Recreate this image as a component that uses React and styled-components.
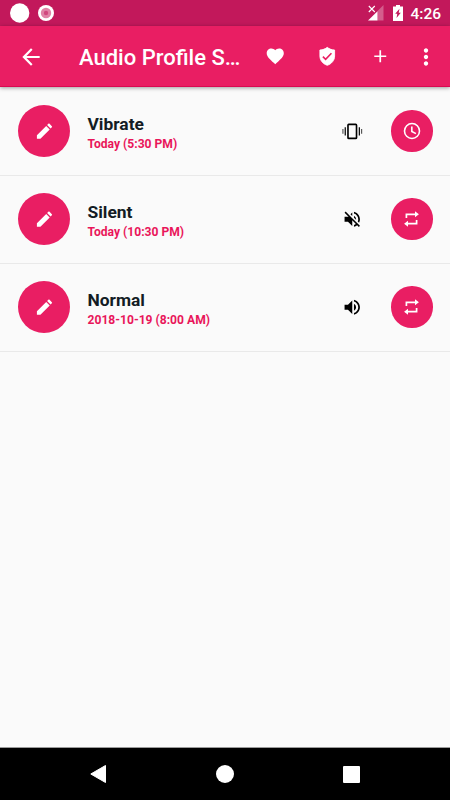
import React from 'react';
import styled, { createGlobalStyle } from 'styled-components';
import {
  MdAdd,
  MdArrowBack,
  MdFavorite,
  MdMoreVert,
  MdVolumeOff,
  MdVolumeUp,
} from 'react-icons/md';

const GlobalStyle = createGlobalStyle`
  * {
    box-sizing: border-box;
  }
  body {
    margin: 0;
    font-family: Roboto, 'Liberation Sans', sans-serif;
    background-color: #fafafa;
  }
  svg {
    display: block;
    flex-shrink: 0;
  }
`;

const StyledScreen = styled.div`
  width: 450px;
  height: 800px;
  display: flex;
  flex-direction: column;
  background-color: #fafafa;
  overflow: hidden;
`;

const StyledStatusBar = styled.div`
  height: 26px;
  flex-shrink: 0;
  display: flex;
  align-items: center;
  justify-content: space-between;
  padding: 0 9px 0 10px;
  background-color: #c2185b;
`;

const StyledStatusGroup = styled.div`
  display: flex;
  align-items: center;
  gap: 9px;
`;

const StyledTime = styled.span`
  font-size: 15.5px;
  font-weight: 500;
  line-height: 26px;
  padding-top: 2px;
  margin-left: -2px;
  color: #fff;
`;

const StyledToolbar = styled.header`
  height: 61px;
  flex-shrink: 0;
  display: flex;
  align-items: center;
  padding: 0 4px 0 18px;
  color: #fff;
  background-color: #e91e63;
  border-bottom: 1px solid #d90a51;
  box-shadow: 0 1px 4px rgba(0, 0, 0, 0.38);
`;

const StyledTitle = styled.h1`
  flex: 1;
  margin: 0 0 0 35px;
  font-size: 22px;
  font-weight: 500;
  line-height: 26px;
  padding-top: 4px;
  white-space: nowrap;
`;

const StyledAction = styled.button`
  width: ${({ $width }) => $width}px;
  height: 52px;
  display: flex;
  align-items: center;
  justify-content: center;
  padding: 1px 0 0;
  border: 0;
  background: none;
  color: inherit;
`;

const StyledList = styled.main`
  flex: 1;
`;

const StyledRow = styled.div`
  height: 88px;
  display: flex;
  align-items: center;
  padding: 0 17.5px 1px;
  border-bottom: 1px solid #e9e9e9;

  &:first-child {
    height: 89px;
    padding-bottom: 0;
  }
`;

const StyledCircle = styled.button`
  width: ${({ $size }) => $size}px;
  height: ${({ $size }) => $size}px;
  flex-shrink: 0;
  display: flex;
  align-items: center;
  justify-content: center;
  padding: 0;
  border: 0;
  border-radius: 50%;
  color: #fff;
  background-color: #e91e63;
`;

const StyledTextContainer = styled.div`
  flex: 1;
  display: flex;
  flex-direction: column;
  padding-top: 5px;
  margin-left: 17.5px;
`;

const StyledName = styled.span`
  font-size: 17.4px;
  font-weight: 700;
  line-height: 21px;
  color: #131c24;
`;

const StyledSchedule = styled.span`
  font-size: 12.1px;
  font-weight: 700;
  line-height: 18px;
  color: #e9165a;
`;

const StyledMode = styled.div`
  margin-right: 28.5px;
  color: #000;
`;

const StyledNavBar = styled.nav`
  height: 53px;
  flex-shrink: 0;
  display: grid;
  grid-template-columns: repeat(3, 126.5px);
  justify-content: center;
  align-items: center;
  justify-items: center;
  background-color: #000;
  border-top: 1px solid #9b9b9b;
`;

function NotificationIcons() {
  return (
    <svg width="46" height="26" viewBox="0 0 46 26">
      <circle cx="9.7" cy="13" r="9.7" fill="#fff" />
      <circle cx="36" cy="13" r="8" fill="#fff" />
      <circle cx="36" cy="13" r="5.2" fill="#e082a6" />
      <circle cx="36" cy="13" r="2.2" fill="#d0487e" />
    </svg>
  );
}

function SignalIcon() {
  return (
    <svg width="16" height="16" viewBox="0 0 16 16">
      <path d="M15.5 0v15.5h-6V6z" fill="#fff" fillOpacity="0.3" />
      <path d="M9.5 6.3v9.2H0z" fill="#fff" />
      <path d="M0.8 1l6 6M6.8 1l-6 6" stroke="#fff" strokeWidth="1.1" />
    </svg>
  );
}

function BatteryIcon() {
  return (
    <svg width="10" height="16" viewBox="0 0 10 16">
      <path d="M3 0h4v1.6h3V16H0V1.6h3z" fill="#fff" />
      <path d="M6.5 3.7L2.2 8.8h2.1l-.8 4.2 4.3-5.2H5.7z" fill="#c2185b" />
    </svg>
  );
}

function ShieldIcon() {
  return (
    <svg width="20.5" height="20.5" viewBox="0 0 24 24">
      <path
        d="M12 1.6C9.7 3.5 6.9 4.5 3.4 4.7v7c0 5.3 3.7 9.3 8.6 10.9 4.9-1.6 8.6-5.6 8.6-10.900v-7C17.1 4.5 14.3 3.5 12 1.6z"
        fill="currentColor"
        stroke="currentColor"
        strokeLinejoin="round"
      />
      <path d="M6.9 12.5l3.2 3.2 6.8-7.2" fill="none" stroke="#e91e63" strokeWidth="1.9" />
    </svg>
  );
}

function PencilIcon() {
  return (
    <svg width="20.5" height="20.5" viewBox="0 0 24 24" fill="currentColor">
      <path d="M3.4 20.8v-4.1L14.3 5.8l4.1 4.1L7.5 20.8zM15.3 4.8l1.5-1.5c.4-.4 1-.4 1.400 0l2.700 2.700c.4.4.4 1 0 1.400l-1.500 1.500z" />
    </svg>
  );
}

function ClockIcon() {
  return (
    <svg width="20" height="20" viewBox="0 0 24 24" fill="none" stroke="currentColor" strokeWidth="1.9">
      <circle cx="12" cy="12" r="9" />
      <path d="M11.8 6.5v6l4.9 2.7" />
    </svg>
  );
}

function RepeatIcon() {
  return (
    <svg width="15" height="16" viewBox="0 0 15 16">
      <path d="M2.4 7V3.3h9M12.6 9v3.7h-9" fill="none" stroke="currentColor" strokeWidth="1.7" />
      <path d="M11 0.3l3.9 3-3.9 3zM4 9.7l-3.9 3 3.9 3z" fill="currentColor" />
    </svg>
  );
}

function VibrateIcon() {
  return (
    <svg width="20.5" height="20.5" viewBox="0 0 24 24" fill="none" stroke="currentColor">
      <rect x="7" y="4" width="10" height="16.4" rx="0.9" strokeWidth="1.9" />
      <path d="M3.8 7.2v9.8M20.3 7.200v9.800" strokeWidth="1.4" />
      <path d="M1.1 9.300v5.700M23 9.300v5.700" strokeWidth="1.200" strokeOpacity="0.75" />
    </svg>
  );
}

const modeIcons = {
  vibrate: <VibrateIcon />,
  silent: <MdVolumeOff size={20.5} />,
  normal: <MdVolumeUp size={20.5} />,
};

const profiles = [
  { name: 'Vibrate', mode: 'vibrate', schedule: 'Today (5:30 PM)', repeat: false },
  { name: 'Silent', mode: 'silent', schedule: 'Today (10:30 PM)', repeat: true },
  { name: 'Normal', mode: 'normal', schedule: '2018-10-19 (8:00 AM)', repeat: true },
];

function ProfileRow({ name, mode, schedule, repeat }) {
  return (
    <StyledRow>
      <StyledCircle $size={52.5} aria-label="Edit">
        <PencilIcon />
      </StyledCircle>
      <StyledTextContainer>
        <StyledName>{name}</StyledName>
        <StyledSchedule>{schedule}</StyledSchedule>
      </StyledTextContainer>
      <StyledMode>{modeIcons[mode]}</StyledMode>
      <StyledCircle $size={41.5} aria-label="Schedule">
        {repeat ? <RepeatIcon /> : <ClockIcon />}
      </StyledCircle>
    </StyledRow>
  );
}

export default function App() {
  return (
    <StyledScreen>
      <GlobalStyle />
      <StyledStatusBar>
        <NotificationIcons />
        <StyledStatusGroup>
          <SignalIcon />
          <BatteryIcon />
          <StyledTime>4:26</StyledTime>
        </StyledStatusGroup>
      </StyledStatusBar>
      <StyledToolbar>
        <StyledAction $width={26} aria-label="Back">
          <MdArrowBack size={26} />
        </StyledAction>
        <StyledTitle>Audio Profile S…</StyledTitle>
        <StyledAction $width={52.5} aria-label="Favorite">
          <MdFavorite size={20.5} />
        </StyledAction>
        <StyledAction $width={52.5} aria-label="Protection">
          <ShieldIcon />
        </StyledAction>
        <StyledAction $width={52.5} aria-label="Add">
          <MdAdd size={20.5} />
        </StyledAction>
        <StyledAction $width={40} aria-label="More">
          <MdMoreVert size={26} />
        </StyledAction>
      </StyledToolbar>
      <StyledList>
        {profiles.map((profile) => (
          <ProfileRow key={profile.name} {...profile} />
        ))}
      </StyledList>
      <StyledNavBar>
        <svg width="18" height="18" viewBox="0 0 18 18">
          <path d="M15.5 0.5v17L0.8 9z" fill="#fff" stroke="#fff" strokeLinejoin="round" />
        </svg>
        <svg width="18" height="18" viewBox="0 0 18 18">
          <circle cx="9" cy="9" r="9" fill="#fff" />
        </svg>
        <svg width="17" height="17" viewBox="0 0 17 17">
          <rect width="17" height="17" rx="1" fill="#fff" />
        </svg>
      </StyledNavBar>
    </StyledScreen>
  );
}
